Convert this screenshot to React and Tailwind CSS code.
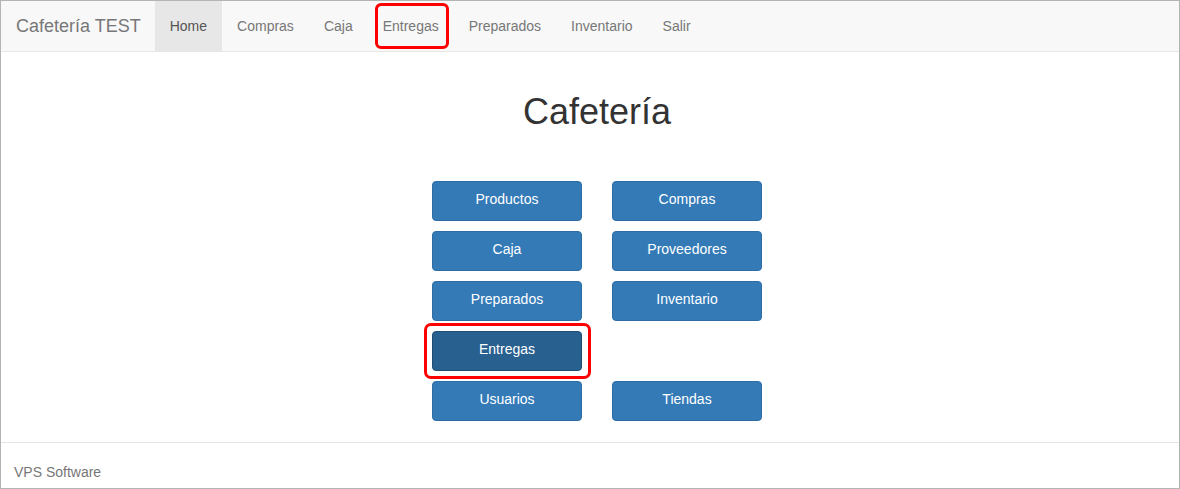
export default function App() {
  const navItems = ["Home", "Compras", "Caja", "Entregas", "Preparados", "Inventario", "Salir"];
  const rows = [
    ["Productos", "Compras"],
    ["Caja", "Proveedores"],
    ["Preparados", "Inventario"],
    ["Entregas", null],
    ["Usuarios", "Tiendas"],
  ];
  return (
    <div className="w-[1180px] h-[489px] border border-[#b4b4b4] bg-white flex flex-col font-['Liberation_Sans',Arial,sans-serif] overflow-hidden">
      <nav className="h-[51px] shrink-0 bg-[#f8f8f8] border-b border-[#e7e7e7] flex items-stretch">
        <div className="pl-[15px] pr-[14px] flex items-center text-[18px] text-[#777]">Cafetería TEST</div>
        {navItems.map((item) => (
          <div
            key={item}
            className={
              item === "Home"
                ? "relative px-[15px] flex items-center text-[14px] text-[#555] bg-[#e7e7e7]"
                : "relative px-[15px] flex items-center text-[14px] text-[#777]"
            }
          >
            {item}
            {item === "Entregas" && (
              <div className="absolute left-[7px] right-[5px] top-[2px] bottom-[2px] border-[3px] border-[#f00] rounded-[6px]" />
            )}
          </div>
        ))}
      </nav>
      <main className="flex-1 flex flex-col items-center pl-[14px]">
        <h1 className="mt-[40px] text-[36px] leading-[1.1] text-[#333] font-normal">Cafetería</h1>
        <div className="mt-[49px] grid grid-cols-[150px_150px] gap-x-[30px] gap-y-[10px]">
          {rows.map((row, i) =>
            row.map((label, j) =>
              label ? (
                <div key={i + "-" + j} className="relative">
                  <div
                    className={
                      label === "Entregas"
                        ? "h-[40px] pb-[3px] rounded-[4px] border border-[#204d74] bg-[#286090] text-white text-[14px] flex items-center justify-center"
                        : "h-[40px] pb-[3px] rounded-[4px] border border-[#2e6da4] bg-[#337ab7] text-white text-[14px] flex items-center justify-center"
                    }
                  >
                    {label}
                  </div>
                  {label === "Entregas" && (
                    <div className="absolute -left-[8px] -right-[9px] -top-[8px] -bottom-[8px] border-[3px] border-[#f00] rounded-[7px]" />
                  )}
                </div>
              ) : (
                <div key={i + "-" + j} />
              )
            )
          )}
        </div>
      </main>
      <footer className="h-[46px] shrink-0 border-t border-[#e5e5e5] pl-[13px] pt-[19px] text-[14px] leading-[20px] text-[#777]">
        VPS Software
      </footer>
    </div>
  );
}
